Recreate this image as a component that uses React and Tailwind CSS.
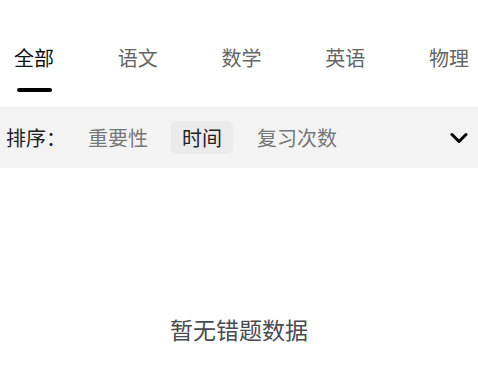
import React from "react";

const tabs = ["全部", "语文", "数学", "英语", "物理"];

export default function App() {
  return (
    <div
      className="w-[478px] h-[373px] bg-white overflow-hidden"
      style={{ fontFamily: '"Noto Sans CJK SC", "Noto Sans", sans-serif' }}
    >
      <div className="flex pl-[14px] pt-[44px] h-[107px] whitespace-nowrap">
        {tabs.map((t, i) => (
          <div key={t} className="relative flex flex-col items-center mr-[63.75px] shrink-0">
            <span
              className={
                "text-[20px] leading-[28px] " +
                (i === 0 ? "text-[#111111]" : "text-[#666666]")
              }
            >
              {t}
            </span>
            {i === 0 && (
              <div className="mt-[16px] w-[35px] h-[4px] rounded-full bg-black" />
            )}
          </div>
        ))}
      </div>
      <div className="flex items-center h-[61px] bg-[#f3f3f3] pl-[6px] pr-[10px]">
        <span className="text-[20px] text-[#222222]">排序：</span>
        <span className="ml-[22px] text-[20px] text-[#777777]">重要性</span>
        <span className="ml-[23px] px-[11px] h-[33px] flex items-center rounded-[6px] bg-[#ebebeb] text-[20px] text-[#222222]">
          时间
        </span>
        <span className="ml-[24px] text-[20px] text-[#777777]">复习次数</span>
        <svg
          className="ml-auto"
          width="18"
          height="12"
          viewBox="0 0 18 12"
          fill="none"
        >
          <path d="M2 2.5 L9 9.5 L16 2.5" stroke="#000" strokeWidth="3" strokeLinecap="round" strokeLinejoin="round" />
        </svg>
      </div>
      <div className="flex justify-center pt-[144px]">
        <span className="text-[23px] text-[#4a4a52]">暂无错题数据</span>
      </div>
    </div>
  );
}
